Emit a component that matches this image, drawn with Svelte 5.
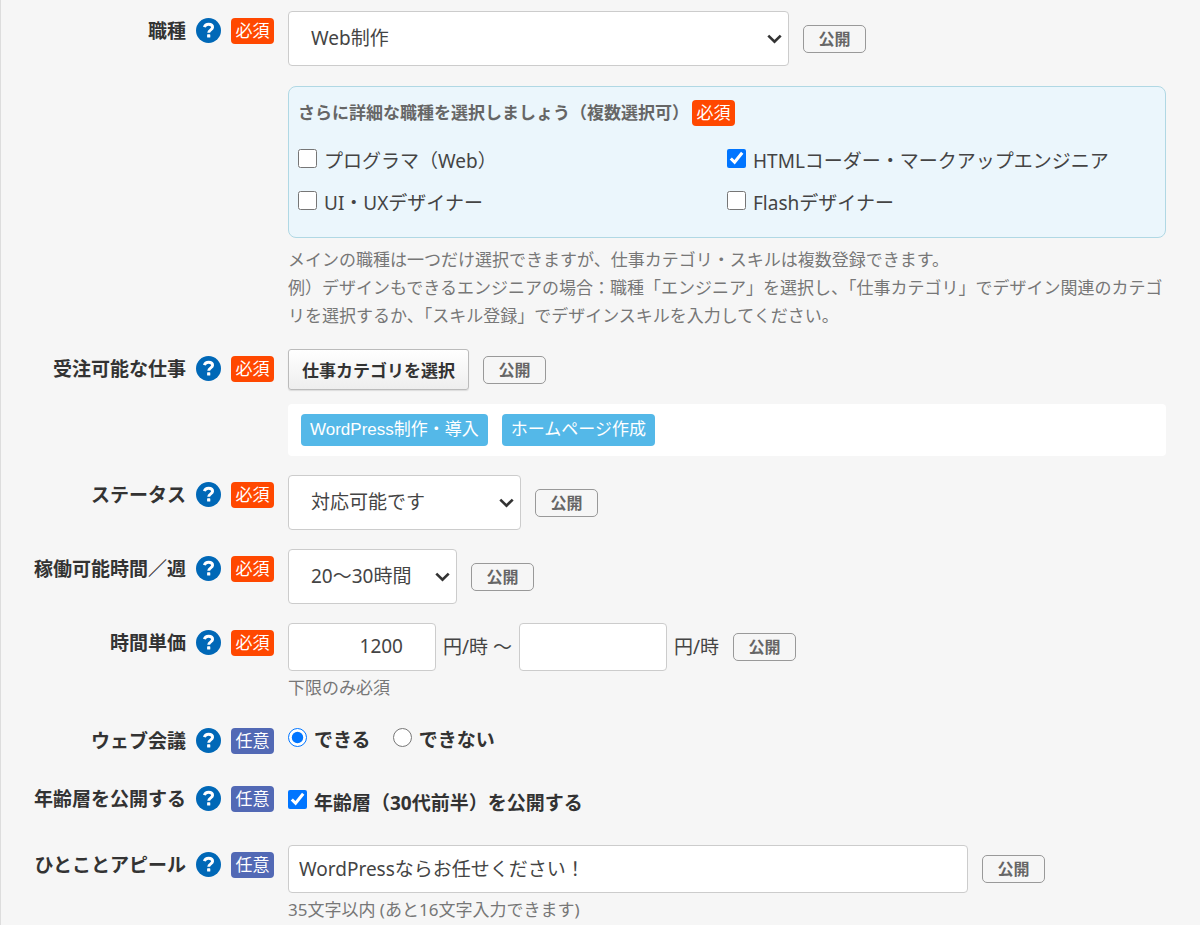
<script lang="ts">
  const titles = {
    job: "職種",
    category: "受注可能な仕事",
    status: "ステータス",
    hours: "稼働可能時間／週",
    price: "時間単価",
    meeting: "ウェブ会議",
    age: "年齢層を公開する",
    appeal: "ひとことアピール",
  };

  let job = $state("Web制作");
  let status = $state("対応可能です");
  let hours = $state("20〜30時間");
  let priceMin = $state("1200");
  let priceMax = $state("");
  let meeting = $state("yes");
  let showAge = $state(true);
  let appeal = $state("WordPressならお任せください！");

  let details = $state([
    { name: "プログラマ（Web）", checked: false },
    { name: "HTMLコーダー・マークアップエンジニア", checked: true },
    { name: "UI・UXデザイナー", checked: false },
    { name: "Flashデザイナー", checked: false },
  ]);

  const categories = ["WordPress制作・導入", "ホームページ作成"];
  const maxLength = 35;
  const rest = $derived(maxLength - appeal.length);
</script>

{#snippet heading(text: string, required: boolean, target: string)}
  <div class="heading">
    {#if target}
      <label class="title" for={target}>{text}</label>
    {:else}
      <span class="title">{text}</span>
    {/if}
    <button type="button" class="help" aria-label="{text}のヘルプ">
      <svg width="25" height="25" viewBox="0 0 25 25" fill="none">
        <circle cx="12.5" cy="12.5" r="12.5" fill="#0068b7" />
        <path d="M8.4 9.2C9 7 10.4 6.2 12.6 6.2C15 6.2 16.6 7.4 16.6 9.3C16.6 11.9 12.7 11.8 12.7 14.8"
              stroke="#fff" stroke-width="2.9" />
        <rect x="11.1" y="16.3" width="3.2" height="3.2" rx="0.6" fill="#fff" />
      </svg>
    </button>
    <span class="badge" class:optional={!required}>{required ? "必須" : "任意"}</span>
  </div>
{/snippet}

{#snippet chevron()}
  <svg class="chevron" width="15" height="10" viewBox="0 0 15 10" fill="none"
       stroke="#333" stroke-width="2.7">
    <path d="M1.3 1.6L7.5 7.6L13.7 1.6" />
  </svg>
{/snippet}

{#snippet publish()}
  <button type="button" class="publish">公開</button>
{/snippet}

<form class="profile">
  <div class="row">
    {@render heading(titles.job, true, "job")}
    <div class="field">
      <div class="line">
        <div class="select wide">
          <select id="job" bind:value={job}>
            <option>Web制作</option>
            <option>エンジニア</option>
          </select>
          {@render chevron()}
        </div>
        {@render publish()}
      </div>
      <div class="details">
        <div class="details-head">
          <strong>さらに詳細な職種を選択しましょう（複数選択可）</strong>
          <span class="badge">必須</span>
        </div>
        <div class="details-list">
          {#each details as item}
            <label class="choice">
              <input type="checkbox" bind:checked={item.checked} />
              {item.name}
            </label>
          {/each}
        </div>
      </div>
      <p class="hint spaced">
        メインの職種は一つだけ選択できますが、仕事カテゴリ・スキルは複数登録できます。<br />
        例）デザインもできるエンジニアの場合：職種「エンジニア」を選択し、「仕事カテゴリ」でデザイン関連のカテゴリを選択するか、「スキル登録」でデザインスキルを入力してください。
      </p>
    </div>
  </div>

  <div class="row">
    {@render heading(titles.category, true, "category")}
    <div class="field">
      <div class="line">
        <button type="button" id="category" class="pick">仕事カテゴリを選択</button>
        {@render publish()}
      </div>
      <div class="tags">
        {#each categories as category}
          <span class="tag">{category}</span>
        {/each}
      </div>
    </div>
  </div>

  <div class="row">
    {@render heading(titles.status, true, "status")}
    <div class="line">
      <div class="select medium">
        <select id="status" bind:value={status}>
          <option>対応可能です</option>
          <option>対応できません</option>
        </select>
        {@render chevron()}
      </div>
      {@render publish()}
    </div>
  </div>

  <div class="row">
    {@render heading(titles.hours, true, "hours")}
    <div class="line">
      <div class="select narrow">
        <select id="hours" bind:value={hours}>
          <option>10〜20時間</option>
          <option>20〜30時間</option>
        </select>
        {@render chevron()}
      </div>
      {@render publish()}
    </div>
  </div>

  <div class="row">
    {@render heading(titles.price, true, "price-min")}
    <div class="field">
      <div class="line">
        <div class="prices">
          <input type="text" inputmode="numeric" id="price-min" class="price" bind:value={priceMin} />
          <span>円/時 ～</span>
          <input type="text" inputmode="numeric" class="price" bind:value={priceMax} aria-label="時間単価の上限" />
          <span>円/時</span>
        </div>
        {@render publish()}
      </div>
      <p class="hint">下限のみ必須</p>
    </div>
  </div>

  <div class="row">
    {@render heading(titles.meeting, false, "")}
    <div class="choices" role="radiogroup" aria-label={titles.meeting}>
      <label class="choice strong">
        <input type="radio" name="meeting" value="yes" bind:group={meeting} />
        できる
      </label>
      <label class="choice strong">
        <input type="radio" name="meeting" value="no" bind:group={meeting} />
        できない
      </label>
    </div>
  </div>

  <div class="row">
    {@render heading(titles.age, false, "age")}
    <div class="choices tall">
      <label class="choice strong">
        <input type="checkbox" id="age" bind:checked={showAge} />
        年齢層（30代前半）を公開する
      </label>
    </div>
  </div>

  <div class="row">
    {@render heading(titles.appeal, false, "appeal")}
    <div class="field">
      <div class="line">
        <input type="text" id="appeal" class="appeal" maxlength={maxLength} bind:value={appeal} />
        {@render publish()}
      </div>
      <p class="hint">{maxLength}文字以内 (あと{rest}文字入力できます)</p>
    </div>
  </div>
</form>

<style>
  :global(body) {
    background: #f6f6f6;
  }

  .profile {
    box-sizing: border-box;
    min-height: 100vh;
    display: flex;
    flex-direction: column;
    gap: 19px;
    padding: 11px 34px 0 0;
    border-left: 1px solid #ddd;
    color: #333;
    font-family: "Noto Sans", "Noto Sans CJK JP", sans-serif;
    font-size: 19px;
    line-height: 28px;
  }

  .profile input,
  .profile select,
  .profile button {
    box-sizing: border-box;
    margin: 0;
    font-family: inherit;
  }

  .row {
    display: grid;
    grid-template-columns: 273px minmax(0, 1fr);
    column-gap: 14px;
    align-items: start;
  }

  .heading {
    display: flex;
    align-items: center;
    justify-content: flex-end;
    gap: 10px;
    height: 39px;
  }

  .title {
    font-weight: 700;
    white-space: nowrap;
  }

  .help {
    display: block;
    width: 25px;
    height: 25px;
    padding: 0;
    border: none;
    background: none;
    cursor: pointer;
  }

  .help svg {
    display: block;
  }

  .badge {
    box-sizing: border-box;
    flex-shrink: 0;
    width: 43px;
    border-radius: 4px;
    background: #ff4800;
    color: #fff;
    font-size: 17px;
    line-height: 26px;
    text-align: center;
  }

  .badge.optional {
    background: #5269b5;
  }

  .line {
    display: flex;
    align-items: center;
    gap: 14px;
  }

  .select {
    position: relative;
    min-width: 0;
  }

  .select.wide {
    width: 501px;
  }

  .select.medium {
    width: 233px;
  }

  .select.narrow {
    width: 169px;
  }

  .select select {
    appearance: none;
    display: block;
    width: 100%;
    height: 55px;
    padding: 0 30px 2px 22px;
    border: 1px solid #ccc;
    border-radius: 4px;
    background: #fff;
    color: #444;
    font-size: 19px;
  }

  .chevron {
    position: absolute;
    top: 23px;
    right: 7px;
    pointer-events: none;
  }

  .publish {
    flex-shrink: 0;
    width: 63px;
    height: 28px;
    padding: 0;
    border: 1px solid #999;
    border-radius: 5px;
    background: #f6f6f6;
    color: #666;
    font-size: 16px;
    font-weight: 700;
    line-height: 24px;
    cursor: pointer;
  }

  .details {
    margin-top: 20px;
    padding: 13px 9px;
    border: 1px solid #b0d8e4;
    border-radius: 8px;
    background: #ebf6fc;
  }

  .details-head {
    display: flex;
    align-items: center;
    gap: 3px;
    margin-bottom: 14px;
    color: #666;
    font-size: 17px;
    line-height: 26px;
  }

  .details-list {
    display: grid;
    grid-template-columns: 1fr 1fr;
    line-height: 42px;
  }

  .choice {
    display: flex;
    align-items: center;
    gap: 7px;
    color: #444;
  }

  .choice.strong {
    color: #333;
    font-weight: 700;
  }

  .choice input {
    flex-shrink: 0;
    width: 19px;
    height: 19px;
    margin-bottom: 6px;
    accent-color: #0075ff;
  }

  .choices {
    display: flex;
    align-items: center;
    gap: 22px;
    height: 38px;
  }

  .choices.tall {
    height: 47px;
  }

  .hint {
    margin: 3px 0 0;
    color: #777;
    font-size: 17px;
  }

  .hint.spaced {
    margin-top: 8px;
  }

  .pick {
    height: 41px;
    padding: 0 13px;
    border: 1px solid #bbb;
    border-radius: 3px;
    background: linear-gradient(#fff, #eee);
    box-shadow: 0 1px 1px #ddd;
    color: #333;
    font-size: 17px;
    font-weight: 700;
    cursor: pointer;
  }

  .tags {
    display: flex;
    flex-wrap: wrap;
    gap: 14px;
    margin-top: 14px;
    padding: 10px 13px;
    border-radius: 4px;
    background: #fff;
  }

  .tag {
    padding: 0 9px;
    border-radius: 4px;
    background: #54b8e8;
    color: #fff;
    font-family: "Liberation Sans", "Noto Sans CJK JP", sans-serif;
    font-size: 17px;
    line-height: 32px;
  }

  .prices {
    display: flex;
    align-items: center;
    gap: 7px;
    color: #444;
  }

  .price,
  .appeal {
    height: 48px;
    padding: 0 10px 2px;
    border: 1px solid #ccc;
    border-radius: 4px;
    background: #fff;
    color: #444;
    font-size: 19px;
  }

  .price {
    width: 148px;
    padding-right: 32px;
    text-align: right;
  }

  .appeal {
    flex: 0 1 680px;
    min-width: 0;
  }
</style>
